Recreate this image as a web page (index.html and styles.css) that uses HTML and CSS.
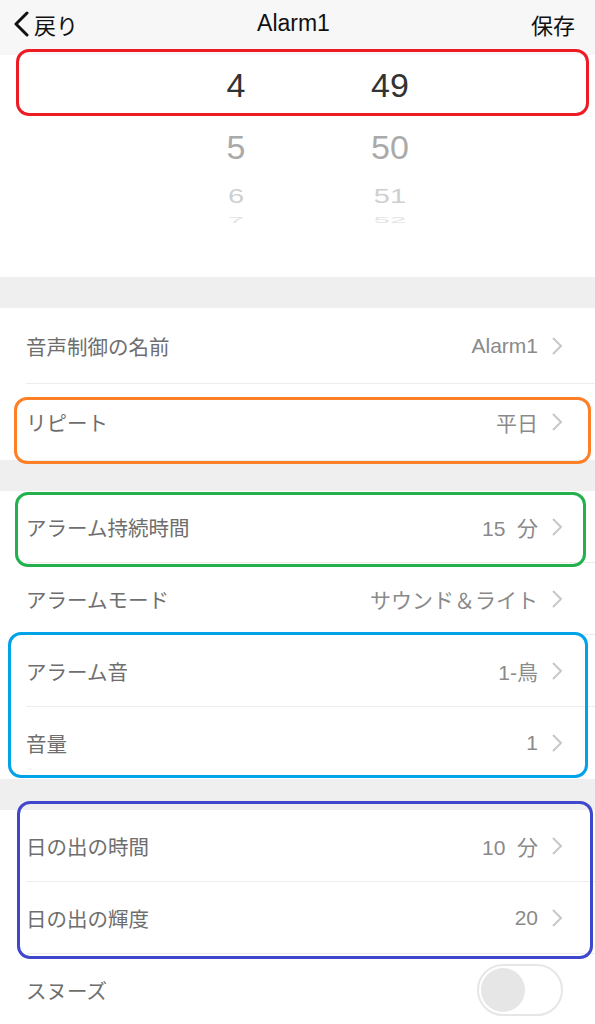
FILE: index.html
```html
<!DOCTYPE html>
<html lang="ja">
<head>
    <meta charset="UTF-8">
    <meta name="viewport" content="width=device-width, initial-scale=1.0">
    <title>Alarm1</title>
    <link rel="stylesheet" href="styles.css">
</head>
<body>
<div class="page">

    <div class="header">
        <div class="back">
            <svg width="18" height="26" viewBox="0 0 18 26"><path d="M15 2 L4 13 L15 24" fill="none" stroke="#111" stroke-width="3" stroke-linecap="round" stroke-linejoin="round"/></svg>
            <span>戻り</span>
        </div>
        <div class="title">Alarm1</div>
        <div class="save">保存</div>
    </div>

    <!-- 時刻ピッカー -->
    <div class="picker">
        <div class="col">
            <div class="item sel">4</div>
            <div class="item near">5</div>
            <div class="item far">6</div>
            <div class="item edge">7</div>
        </div>
        <div class="col">
            <div class="item sel">49</div>
            <div class="item near">50</div>
            <div class="item far">51</div>
            <div class="item edge">52</div>
        </div>
    </div>

    <div class="gap"></div>

    <div class="section">
        <div class="row r76">
            <span class="label">音声制御の名前</span>
            <span class="value">Alarm1</span>
            <svg class="chev" width="12" height="20" viewBox="0 0 12 20"><path d="M2 2 L10 10 L2 18" fill="none" stroke="#c7c7c7" stroke-width="2"/></svg>
        </div>
        <div class="row r76">
            <span class="label">リピート</span>
            <span class="value">平日</span>
            <svg class="chev" width="12" height="20" viewBox="0 0 12 20"><path d="M2 2 L10 10 L2 18" fill="none" stroke="#c7c7c7" stroke-width="2"/></svg>
        </div>
    </div>

    <div class="gap"></div>

    <div class="section">
        <div class="row r72">
            <span class="label">アラーム持続時間</span>
            <span class="value">15&nbsp;&nbsp;分</span>
            <svg class="chev" width="12" height="20" viewBox="0 0 12 20"><path d="M2 2 L10 10 L2 18" fill="none" stroke="#c7c7c7" stroke-width="2"/></svg>
        </div>
        <div class="row r72">
            <span class="label">アラームモード</span>
            <span class="value">サウンド＆ライト</span>
            <svg class="chev" width="12" height="20" viewBox="0 0 12 20"><path d="M2 2 L10 10 L2 18" fill="none" stroke="#c7c7c7" stroke-width="2"/></svg>
        </div>
        <div class="row r72">
            <span class="label">アラーム音</span>
            <span class="value">1-鳥</span>
            <svg class="chev" width="12" height="20" viewBox="0 0 12 20"><path d="M2 2 L10 10 L2 18" fill="none" stroke="#c7c7c7" stroke-width="2"/></svg>
        </div>
        <div class="row r72">
            <span class="label">音量</span>
            <span class="value">1</span>
            <svg class="chev" width="12" height="20" viewBox="0 0 12 20"><path d="M2 2 L10 10 L2 18" fill="none" stroke="#c7c7c7" stroke-width="2"/></svg>
        </div>
    </div>

    <div class="gap"></div>

    <div class="section last">
        <div class="row r72">
            <span class="label">日の出の時間</span>
            <span class="value">10&nbsp;&nbsp;分</span>
            <svg class="chev" width="12" height="20" viewBox="0 0 12 20"><path d="M2 2 L10 10 L2 18" fill="none" stroke="#c7c7c7" stroke-width="2"/></svg>
        </div>
        <div class="row r72">
            <span class="label">日の出の輝度</span>
            <span class="value">20</span>
            <svg class="chev" width="12" height="20" viewBox="0 0 12 20"><path d="M2 2 L10 10 L2 18" fill="none" stroke="#c7c7c7" stroke-width="2"/></svg>
        </div>
        <div class="row r72">
            <span class="label">スヌーズ</span>
            <div class="toggle"><div class="knob"></div></div>
        </div>
    </div>

    <!-- 注釈の枠 -->
    <div class="mark red"></div>
    <div class="mark orange"></div>
    <div class="mark green"></div>
    <div class="mark blue"></div>
    <div class="mark navy"></div>

</div>
</body>
</html>
```

FILE: styles.css
```css
body {
    margin: 0;
    background-color: #efefef;
    font-family: "Liberation Sans", "Noto Sans CJK JP", sans-serif;
}
.page {
    position: relative;
    width: 595px;
    height: 1024px;
    overflow: hidden;
}
.header {
    height: 55px;
    box-sizing: border-box;
    padding: 0 20px 8px 12px;
    background-color: #f7f7f7;
    display: grid;
    grid-template-columns: 1fr auto 1fr;
    align-items: center;
    color: #111;
    font-size: 22px;
}
.back {
    display: flex;
    align-items: center;
    gap: 4px;
}
.title {
    font-size: 23px;
}
.save {
    justify-self: end;
}
.picker {
    height: 222px;
    background: #fff;
    display: flex;
    padding-left: 186px;
    gap: 54px;
}
.col {
    width: 100px;
    display: flex;
    flex-direction: column;
}
.item {
    display: flex;
    align-items: center;
    justify-content: center;
    line-height: 1;
}
.sel {
    height: 60px;
    font-size: 34px;
    color: #333;
}
.near {
    height: 64px;
    font-size: 34px;
    color: #aaa;
}
.far {
    height: 34px;
    font-size: 29px;
    color: #cfcfcf;
    transform: scaleY(0.7);
}
.edge {
    height: 14px;
    font-size: 29px;
    color: #e4e4e4;
    transform: scaleY(0.3);
}
.gap {
    height: 31px;
}
.section {
    background: #fff;
}
.section.last {
    height: 300px;
}
.row {
    margin-left: 26px;
    padding-right: 32px;
    display: flex;
    align-items: center;
    border-bottom: 1px solid #ededed;
    box-sizing: border-box;
}
.section .row:last-child {
    border-bottom: none;
}
.r76 { height: 76px; }
.r72 { height: 72px; }
.label {
    flex: 1;
    font-size: 20.5px;
    color: #6e6e6e;
}
.value {
    font-size: 21px;
    color: #8a8a8a;
}
.chev {
    margin-left: 13px;
}
.toggle {
    width: 80px;
    height: 48px;
    border: 2px solid #e6e6e6;
    border-radius: 26px;
    background: #fff;
    display: flex;
    align-items: center;
    padding-left: 2px;
}
.knob {
    width: 44px;
    height: 44px;
    border-radius: 50%;
    background: #e6e6e6;
}
.mark {
    position: absolute;
    border: 3px solid;
    border-radius: 13px;
    box-sizing: border-box;
}
.red { left: 16px; top: 49px; width: 573px; height: 67px; border-color: #ed1c24; }
.orange { left: 14px; top: 397px; width: 577px; height: 67px; border-color: #ff7f27; }
.green { left: 15px; top: 492px; width: 571px; height: 75px; border-color: #22b14c; }
.blue { left: 8px; top: 632px; width: 580px; height: 146px; border-color: #00a2e8; }
.navy { left: 17px; top: 801px; width: 576px; height: 158px; border-color: #3f48cc; }
```
